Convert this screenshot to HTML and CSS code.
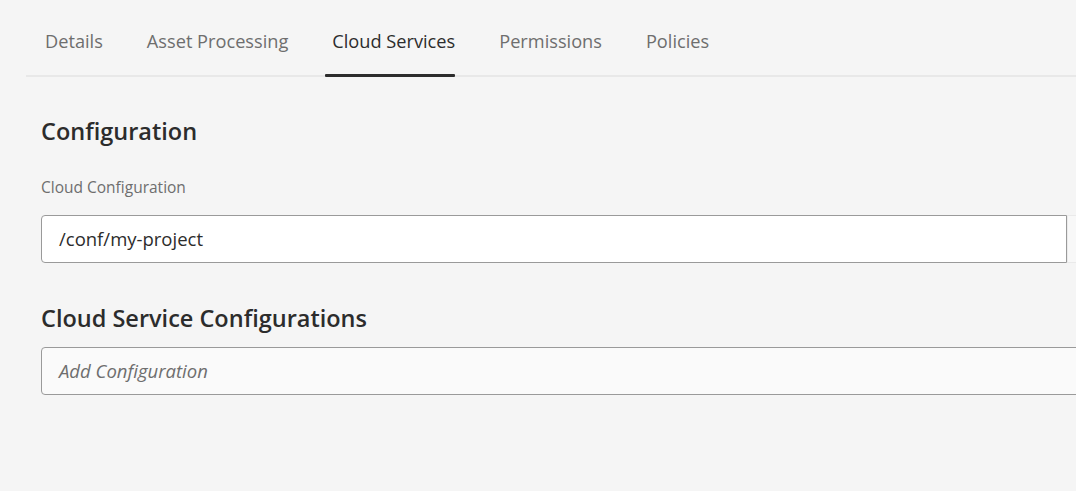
FILE: index.html
```html
<!DOCTYPE html>
<html>
<head>
<meta charset="utf-8">
<link rel="stylesheet" href="styles.css">
</head>
<body>
<div class="page">
  <nav class="tabs">
    <div class="tab">Details</div>
    <div class="tab">Asset Processing</div>
    <div class="tab active">Cloud Services</div>
    <div class="tab">Permissions</div>
    <div class="tab">Policies</div>
  </nav>
  <section class="content">
    <h2 class="heading">Configuration</h2>
    <label class="label">Cloud Configuration</label>
    <div class="field-row">
      <div class="input">/conf/my-project</div>
      <div class="side-btn"></div>
    </div>
    <h2 class="heading heading2">Cloud Service Configurations</h2>
    <div class="input input2"><span class="placeholder">Add Configuration</span></div>
  </section>
</div>
</body>
</html>
```
FILE: styles.css
```css
html, body {
  margin: 0;
  padding: 0;
  background: #f5f5f5;
  font-family: "Open Sans", "Noto Sans", sans-serif;
  overflow: hidden;
}
.page {
  width: 1076px;
  height: 491px;
}
.tabs {
  display: flex;
  margin-left: 26px;
  height: 75px;
  border-bottom: 2px solid #e8e8e8;
  padding-left: 19px;
  gap: 44px;
}
.tab {
  font-size: 18.2px;
  color: #6e6e6e;
  line-height: 20px;
  padding-top: 31px;
  position: relative;
}
.tab.active {
  color: #2c2c2c;
}
.tab.active::after {
  content: "";
  position: absolute;
  left: -7px;
  right: 0;
  bottom: -2px;
  height: 3px;
  background: #2c2c2c;
  border-radius: 1px;
}
.content {
  padding-left: 41px;
}
.heading {
  margin: 0;
  font-size: 23.5px;
  font-weight: 600;
  color: #2c2c2c;
  line-height: 30px;
  padding-top: 39px;
}
.heading2 {
  padding-top: 40px;
}
.label {
  display: block;
  font-size: 15.5px;
  color: #6e6e6e;
  margin-top: 31px;
  line-height: 20px;
}
.field-row {
  display: flex;
  margin-top: 18px;
}
.input {
  box-sizing: border-box;
  flex-shrink: 0;
  height: 48px;
  width: 1026px;
  background: #fff;
  border: 1px solid #9a9a9a;
  border-radius: 4px 0 0 4px;
  padding-left: 17px;
  font-size: 18.5px;
  line-height: 46px;
  color: #2c2c2c;
}
.side-btn {
  flex-shrink: 0;
  width: 20px;
  height: 48px;
  box-sizing: border-box;
  border-top: 1px solid #eaeaea;
  border-bottom: 1px solid #eaeaea;
  border-left: 1px solid #ebebeb;
  background: #f8f8f8;
}
.input2 {
  width: 1060px;
  margin-top: 14px;
  background: #fafafa;
  border-radius: 4px;
}
.placeholder {
  font-style: italic;
  color: #6e6e6e;
}
```
